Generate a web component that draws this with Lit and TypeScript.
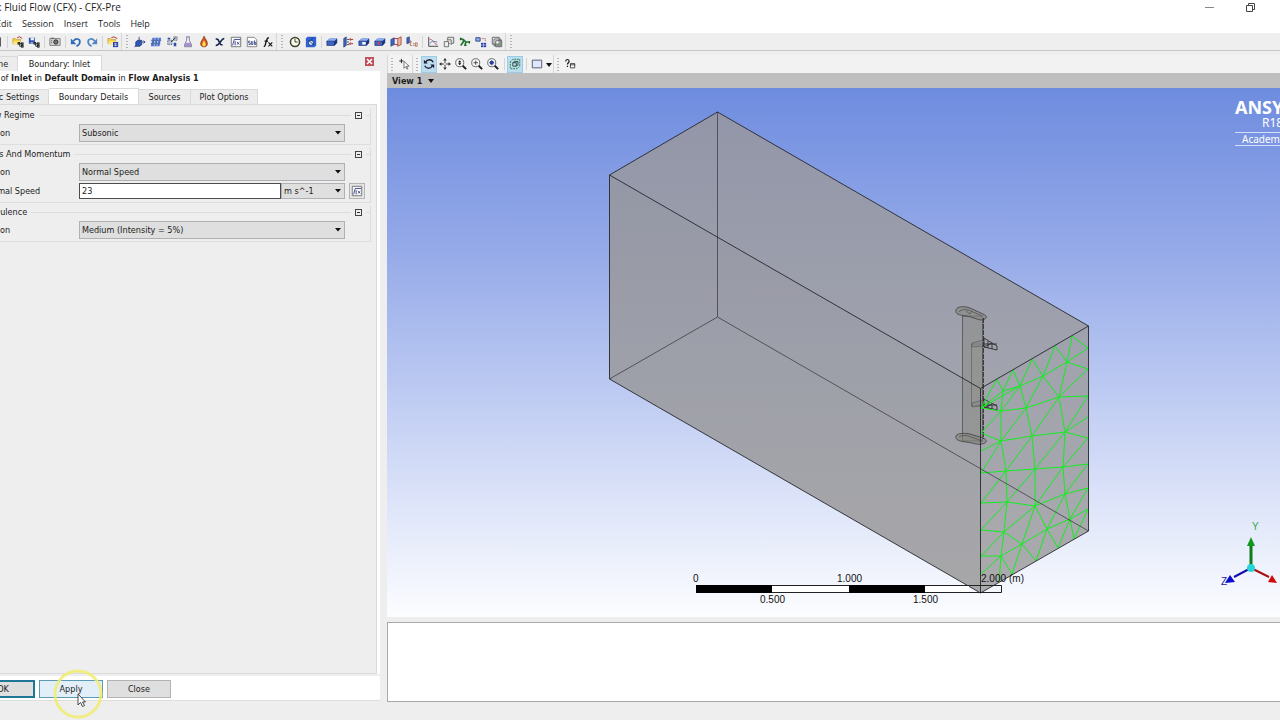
import { LitElement, html, css, svg } from "lit";
import { customElement, property, state } from "lit/decorators.js";

/* Toolbar glyphs, each drawn on a 14 x 14 grid. */
const folder = svg`<path d="M1 3h3l1 1h5v5H1z" fill="#f3cf3f" stroke="#a8841c" stroke-width=".6"/><path d="M2 6h9l-2 4H1z" fill="#fbe680"/>`;
const tree = svg`<g fill="none" stroke="#20242a" stroke-width="1"><path d="M8 9h3M9 9v3h2"/><rect x="7" y="7.500" width="2" height="2" fill="#4c9a54"/><rect x="11" y="8" width="2" height="2" fill="#4c9a54"/><rect x="11" y="11" width="2" height="2" fill="#4c9a54"/></g>`;
const slab = svg`<path d="M1 6l3-3h9v5l-3 3H1z" fill="#3c64c8"/><path d="M1 6l3-3h9l-3 3z" fill="#8fb0f2"/><path d="M10 6l3-3v5l-3 3z" fill="#1d3680"/><path d="M1 6h9v5H1z" fill="none" stroke="#16255c" stroke-width=".7"/>`;
const lens = svg`<circle cx="5.500" cy="5.500" r="4.700" fill="#f7f7f7" stroke="#50545c"/><path d="M9 9l4 4" stroke="#1b1b1b" stroke-width="2.200"/>`;

const glyphs: Record<string, unknown> = {
  new: svg`<path d="M4 2h7v10H4z" fill="#fff" stroke="#333"/>`,
  open: svg`${folder}${tree}<path d="M6 2l3-1 3 2" stroke="#b02020" fill="none"/>`,
  save: svg`<path d="M1 2h7v7H1z" fill="#2d4fae"/><path d="M3 2h4v3H3z" fill="#e8eefc"/><path d="M3 7h3v2H3z" fill="#9ab"/>${tree}`,
  camera: svg`<path d="M1 3h12v8H1z" fill="#d4d4d4" stroke="#777"/><path d="M2 2h4v1H2z" fill="#555"/><circle cx="8" cy="7" r="2.500" fill="#777" stroke="#222"/><path d="M3 5v4" stroke="#444" stroke-dasharray="1 1"/>`,
  undo: svg`<path d="M4 6C6 2 12 3 11.500 7c0 3-2 4-4 5" fill="none" stroke="#2f6cb8" stroke-width="2"/><path d="M1 3v6.500h6.500z" fill="#2f6cb8"/>`,
  redo: svg`<path d="M10 6C8 2 2 3 2.500 7c0 3 2 4 4 5" fill="none" stroke="#4f86c2" stroke-width="2"/><path d="M13 3v6.500H6.500z" fill="#4f86c2"/>`,
  export: svg`${folder}<path d="M5 2l3-1 4 2" stroke="#b02020" fill="none"/><path d="M7 7h6v6H7z" fill="#2742a6"/><path d="M8 9h4M8 11h4M10 8v4" stroke="#dce4ff" stroke-width=".7"/>`,
  domain: svg`<path d="M2 7l2-2h5v5l-2 2H2z" fill="#2f57b8" stroke="#14245c" stroke-width=".7"/><path d="M9 7h3M11 5.500l2 1.500-2 1.500M6 5V1M2 11l-1 2" stroke="#233a7c" fill="none"/>`,
  mesh: svg`<path d="M3 2h10l-2 10H1z" fill="#4770cc"/><path d="M2 5h11M1.500 9h11M6 2L5 12M10 2L8 12" stroke="#dde7ff" stroke-width=".8"/><path d="M1 5h12M1 9h11" stroke="#18306e" stroke-width=".8"/>`,
  interface: svg`<path d="M2 5h5v5H2zM9 1h4v4H9z" fill="#b9c6e6" stroke="#444" stroke-dasharray="1 1"/><path d="M9 8h3v4H9zM2 2h3v2H2z" fill="#2d4fae"/><path d="M6 7l5-5" stroke="#222"/>`,
  flask: svg`<path d="M5 1h4M5.500 1v4L3 10v2.500h8V10L8.500 5V1" fill="#f6f4fc" stroke="#6d6a90"/><path d="M4 8h6l1 4H3z" fill="#a58fd0"/>`,
  flame: svg`<path d="M7 0c1 3 4 5 4 9 0 5-8 5-8 0 0-3 3-5 4-9z" fill="#d8501c" stroke="#5c2410" stroke-width=".6"/><path d="M7 5c1 2 2 3 2 5 0 3-4 3-4 0 0-2 1-3 2-5z" fill="#ffe04c"/>`,
  chi: svg`<path d="M2 4c4-3 4 8 8 6M12 3C8 3 7 11 2 11" fill="none" stroke="#15234f" stroke-width="1.800"/>`,
  expr: svg`<path d="M1.500 1.500h11v11h-11z" fill="#fff" stroke="#666"/><path d="M3 11l2-7h7M6 6v5M8 7l3 3M11 7l-3 3" fill="none" stroke="#24307c"/>`,
  sub: svg`<path d="M1.500 1.500h8l3 3v8h-11z" fill="#fff" stroke="#777"/><path d="M5 6H3v2h2v2H3M6.500 6v4h1.500V6M10 5v5h1.500V7.500H10" fill="none" stroke="#24307c" stroke-width=".9"/>`,
  fx: svg`<path d="M2 12c3 1 2-10 6-10M3 6h4" fill="none" stroke="#111" stroke-width="1.600"/><path d="M7.500 7.500l4.500 4.500M12 7.500L7.500 12" stroke="#111" stroke-width="1.300"/>`,
  clock: svg`<circle cx="7" cy="7" r="5.300" fill="#fafaea" stroke="#3d3f28" stroke-width="1.800"/><path d="M7 3.500V7h3" fill="none" stroke="#222"/>`,
  solver: svg`<path d="M1 3l2-2h10v10l-2 2H1z" fill="#2f62d0"/><circle cx="7" cy="8" r="3" fill="#dbe7ff" stroke="#173784"/><path d="M4 5l6 5M7 4l3-2" stroke="#173784"/>`,
  slab,
  inlet: svg`<path d="M2 3l3-2v10l-3 2z" fill="#3c64c8" stroke="#16255c" stroke-width=".6"/><path d="M6 4h2M6 7h2M6 10h2" stroke="#222"/><path d="M13 4H9M13 9H9M10 2.500L8.500 4 10 5.500M10 7.500L8.500 9l1.500 1.500" stroke="#a01c1c" fill="none"/>`,
  slabOpen: svg`${slab}<path d="M5 7h4v3H5z" fill="#fff"/>`,
  slabPoint: svg`${slab}<circle cx="5.500" cy="8.500" r="1.400" fill="#e04040"/>`,
  pair: svg`<path d="M1 4l4-2v8l-4 2z" fill="#3c64c8" stroke="#16255c" stroke-width=".6"/><path d="M9 3l4-2v9l-4 2z" fill="#eab6a4" stroke="#8c3020" stroke-width=".8"/><path d="M5 3l4 0M5 10h4" stroke="#a01c1c"/>`,
  initial: svg`<path d="M1 2l3-1v7L1 9z" fill="#3c64c8" stroke="#16255c" stroke-width=".6"/><path d="M5 5v6h2M4 7h3M8 9h2M8 11h2M11 8h2v4h-2z" stroke="#a8604c" fill="none" stroke-width=".9"/>`,
  chart: svg`<path d="M2 1v11h11" fill="none" stroke="#333"/><path d="M3 4c4-1 4 5 9 6" stroke="#c44460" fill="none"/><path d="M3 9l3-3 6 1" stroke="#6074ac" fill="none"/>`,
  boxes: svg`<path d="M5.500 1.500h7v7h-7z" fill="#e4e4e4" stroke="#5f6264"/><path d="M1.500 6.500h5v6h-5zM4.500 4.500h5v6" fill="#efefef" stroke="#5f6264"/>`,
  branch: svg`<path d="M1 3l4 1 3 3h5M5 4v3l-3 4M8 7l-1 4" stroke="#1f7a2e" stroke-width="2" fill="none"/><path d="M2 2v3M12 6v3M6 11h3" stroke="#143c1a"/>`,
  config: svg`<path d="M1 2h5v4H1z" fill="#8fb0f2" stroke="#233a7c"/><path d="M7 8h6v5H7z" fill="#2742a6"/><path d="M7 10.500h6M10 8v5" stroke="#fff" stroke-width=".6"/><path d="M8 3h4v4" stroke="#b02020" stroke-dasharray="1 1" fill="none"/>`,
  copies: svg`<path d="M1.500 1.500h8v8h-8zM3.500 3.500h8v8h-8zM5.500 5.500h7v7h-7z" fill="#f6f6f6" stroke="#55585a"/><path d="M7 9l2 2 2-3" stroke="#2a8a3a" fill="none"/>`,
  pick: svg`<path d="M4 1v5M1.500 3.500h5" stroke="#111"/><path d="M7 4v8l2-2 1.500 3 1-.500L10 9.500h3z" fill="#fff" stroke="#444" stroke-width=".8"/>`,
  rotate: svg`<path d="M12 5C10 1 5 1 3 5M2 9c2 4 7 4 9 0" fill="none" stroke="#1d1d2c" stroke-width="1.600"/><path d="M1 2v4.500h4.500zM13 12V7.500H8.500z" fill="#1d1d2c"/>`,
  pan: svg`<path d="M7 3v3M7 8v3M3 7h3M8 7h3" stroke="#222"/><path d="M7 0l2 3H5zM7 14l2-3H5zM0 7l3-2v4zM14 7l-3-2v4z" fill="#222"/>`,
  zoom: svg`${lens}<path d="M5.500 2.500l2 2.500h-4zM5.500 8.500l2-2.500h-4z" fill="#222"/><path d="M5.500 4v3" stroke="#222"/>`,
  zoomBox: svg`${lens}<path d="M5.500 3v5M3 5.500h5" stroke="#333"/>`,
  fit: svg`${lens}<path d="M3.500 3.500h4v4h-4z" fill="#2a3f98"/><path d="M2.500 5.500h6M5.500 2.500v6" stroke="#2a3f98"/>`,
  highlight: svg`<path d="M1.500 4.500l3-3h8v8l-3 3h-8z" fill="#b9dfe4" stroke="#14703c" stroke-dasharray="2 1"/><path d="M4.500 5.500h4v4h-4zM4.500 5.500l2-1.500h4v4l-2 1.500" fill="none" stroke="#1a3c3c"/>`,
  square: svg`<path d="M1.500 2.500h11v9h-11z" fill="#dfe7fb" stroke="#444c68"/>`,
  help: svg`<path d="M2 4c0-3 4-3 4 0 0 1.500-2 1.500-2 3.500M4 9v1.500" stroke="#111" fill="none" stroke-width="1.400"/><path d="M7.500 6.500h5v5h-5zM7 8h6" fill="#fff" stroke="#333"/>`,
};

type Item = [string, string] | "sep" | "grip";
const mainTools: Item[] = [
  ["new", "New"], "sep", ["open", "Open case"], ["save", "Save case"], "sep",
  ["camera", "Save picture"], "sep", ["undo", "Undo"], ["redo", "Redo"], "sep",
  ["export", "Import mesh"], "grip",
  ["domain", "Domain"], ["mesh", "Mesh"], ["interface", "Domain interface"],
  ["flask", "Material"], ["flame", "Reaction"], ["chi", "Additional variable"],
  ["expr", "Expression"], ["sub", "User routine"], ["fx", "User function"], "grip",
  ["clock", "Analysis type"], ["solver", "Solver control"], "sep",
  ["slab", "New domain"], ["inlet", "Boundary"], ["slabOpen", "Subdomain"],
  ["slabPoint", "Source point"], ["pair", "Interface"], ["initial", "Initialisation"], "sep",
  ["chart", "Monitor"], ["boxes", "Mesh adaption"], ["branch", "Output control"],
  ["config", "Configuration"], ["copies", "Execution control"], "grip",
];
const viewTools: Item[] = [
  "grip", ["pick", "Select"], "grip", ["rotate", "Rotate"], ["pan", "Pan"],
  ["zoom", "Zoom"], ["zoomBox", "Zoom box"], ["fit", "Fit view"], "sep",
  ["highlight", "Highlighting"], "sep", ["square", "Viewport layout"],
];

@customElement("tool-strip")
class ToolStrip extends LitElement {
  @property({ attribute: false }) items: Item[] = [];
  @property({ attribute: false }) active: string[] = [];
  static styles = css`
    :host { display: flex; align-items: center; height: 100%; --grip: 10px; --sep: 5px; }
    :host([compact]) { --grip: 8px; --sep: 6px; }
    .tool { width: 16px; height: 17px; padding: 0; border: 0; background: none; display: grid; place-items: center; flex: none; }
    .on { background: #bddcf0; box-shadow: inset 0 0 0 1px #99cde9; }
    .icon { width: 12px; height: 12px; display: block; }
    .sep { width: var(--sep); height: 12px; flex: none; background: linear-gradient(#d4d4d4, #d4d4d4) center / 1px 100% no-repeat; }
    .grip { width: var(--grip); height: 100%; flex: none; border-left: 1px solid #d6d6d6; display: grid; place-items: center; }
    .dots { width: 2px; height: 13px; background: repeating-linear-gradient(#b4b4b4 0 1px, transparent 1px 3px); }
  `;
  render() {
    return this.items.map((it) =>
      it === "sep" ? html`<span class="sep"></span>`
      : it === "grip" ? html`<span class="grip"><span class="dots"></span></span>`
      : html`<button class="tool ${this.active.includes(it[0]) ? "on" : ""}" aria-label=${it[1]}>
          <svg class="icon" viewBox="0 0 14 14">${glyphs[it[0]]}</svg>
        </button>`);
  }
}

/* Triangulated inlet face: node positions and the edges between them. */
const nodes: Record<string, [number, number]> = {
  a: [997, 379], b: [1013, 370], c: [1032, 359], d: [1055, 346], e: [1072, 336],
  n1: [1003, 391], n2: [1020, 386], n3: [1043, 376], n4: [1067, 362],
  r1: [1088, 348], r2: [1088, 369], r3: [1088, 396], r4: [1088, 417], r5: [1088, 438],
  r6: [1088, 464], r7: [1088, 488], r8: [1088, 509],
  n5: [981, 408], n6: [1001, 411], n7: [1026, 408], n8: [1059, 397],
  n9: [1001, 441], n10: [1032, 436], n11: [1065, 432],
  l1: [981, 433], l2: [981, 451], l3: [981, 473], l4: [981, 503], l5: [981, 530], l6: [981, 556], l7: [981, 574],
  n12: [1006, 471], n13: [1035, 469], n14: [1063, 467],
  n15: [1007, 502], n16: [1035, 506], n17: [1065, 494],
  n18: [1004, 532], n19: [1022, 544], n20: [1047, 529], n21: [1070, 519], n22: [1001, 556],
  b1: [1074, 539], b2: [1058, 548], b3: [1036, 561], b4: [1012, 574], b5: [999, 582],
};
const edges = `a-n1 a-n5 b-n1 b-n2 c-n2 c-n3 d-n3 d-n4 e-n4 e-r1 n4-r1 n1-n2 n2-n3 n3-n4 n4-r2 n1-n6 n1-n5
n2-n5 n2-n6 n2-n7 n3-n7 n3-n8 n4-n8 r2-n8 n8-r3 n8-n7 n7-n6 n6-n5 n6-l1 n6-n9 n7-n9 n7-n10 n8-n10 n8-n11 r3-n11
r4-n11 r5-n11 n11-n10 n10-n9 n9-l1 n9-l2 n9-l3 n9-n12 n10-n12 n10-n13 n11-n13 n11-n14 r5-n14 r6-n14 n14-n13
n13-n12 n12-l3 n12-l4 n12-n15 n13-n15 n13-n16 n14-n16 n14-n17 r6-n17 r7-n17 n17-n16 n16-n15 n15-l4 n15-l5
n15-n18 n16-n18 n16-n19 n16-n20 n17-n20 n17-n21 r7-n21 r8-n21 r8-b1 n21-b1 n21-n20 n20-n19 n19-n18 n18-l5 n18-l6
n18-n22 n19-n22 n19-b4 n19-b3 n20-b3 n20-b2 n21-b2 n22-l6 n22-l7 n22-b5 n22-b4`;
const meshPath = edges.split(/\s+/).map((e) => {
  const [p, q] = e.split("-").map((k) => nodes[k]);
  return `M${p}L${q}`;
}).join("");

@customElement("scene-view")
class SceneView extends LitElement {
  static styles = css`
    :host { display: block; position: relative; overflow: hidden; background: linear-gradient(#6e8cdf, #94a9e8 30%, #b9c7f1 55%, #dde4f9 78%, #fcfdff); }
    .scene { position: absolute; left: 0; top: 0; width: 893px; height: 529px; overflow: visible; }
    .lbl { font: 10px "Liberation Sans", Arial, sans-serif; fill: #111; }
    .yax { fill: #3aa84a; }
    .zax { fill: #22228c; }
    .brand { position: absolute; top: 9px; right: 0; width: 85px; color: #fff; font-family: "Noto Sans", sans-serif; }
    .name { font-size: 18px; line-height: 20px; font-weight: 700; }
    .rel { font-size: 12px; line-height: 11px; padding-left: 27px; }
    .lic { font-size: 10px; line-height: 12px; margin-top: 4px; padding-left: 7px; border-block: 1px solid #d5def8; }
  `;
  render() {
    return html`
      <svg class="scene" viewBox="387 88 893 529" role="img" aria-label="Wind tunnel domain with inlet mesh">
        <defs>
          <linearGradient id="body" x1="0" y1="0" x2="0" y2="1">
            <stop offset="0" stop-color="#9296a8"/><stop offset=".5" stop-color="#a0a2ad"/><stop offset="1" stop-color="#ababad"/>
          </linearGradient>
        </defs>
        <path d="M717.500 112L1088.500 326V531L980.500 593L609.500 379V175Z" fill="url(#body)"/>
        <path d="M609.500 175L980.500 388.500V593L609.500 379Z" fill="#85888c" fill-opacity=".1"/>
        <g stroke="#3c3d3c" stroke-width=".8" fill-opacity=".6">
          <path d="M962.500 316h20v125h-20z" fill="#8d8d8b" stroke-opacity=".8"/>
          <path d="M971.500 344h11v62h-11z" fill="#93948f" stroke-opacity=".5"/>
          <path d="M956 310c1-4 9-4 14-2l13 6c5 2 4 5-1 6-5 0-8-3-16-4-7-1-11-2-10-6z" fill="#85857e"/>
          <path d="M959 312c2-3 8-3 12-1l11 5M966 311l4 3 2-3" fill="none" stroke-opacity=".7"/>
          <path d="M956 436c1-3 9-3 14-2l13 4c5 2 4 5-1 6-5 1-8-1-16-2-7-1-11-2-10-6z" fill="#85857e"/>
          <path d="M959 437c3-2 8-2 12 0l11 4" fill="none" stroke-opacity=".7"/>
          <path d="M972 343l11-3v6l-11 1zM972 403l11-3v5l-11 2z" fill="#85868a" stroke-opacity=".5"/>
          <path d="M984 338l13 8v4l-13-3zM984 344h13M988 341v7M992 344v5M984 347l8-4M984 399l13 7v4l-13-3zM984 405h13M988 402v7M992 405v4M984 408l8-4" fill="none" stroke="#222"/>
          <path d="M983.500 318v121" stroke="#222" stroke-dasharray="5 1"/>
        </g>
        <path d=${meshPath} fill="none" stroke="#12ee20" stroke-width="1"/>
        <path d="M717.500 112V317L609.500 379M717.500 317L1088.500 531" fill="none" stroke="#3f4044" stroke-width=".8"/>
        <path d="M609.500 175L717.500 112L1088.500 326L980.500 388.500ZM609.500 175V379L980.500 593V388.500M980.500 593L1088.500 531V326" fill="none" stroke="#26272a" stroke-width=".9"/>
        <path d="M772 586h77v6h-77zM925 586h44v6h-44z" fill="#fff"/>
        <path d="M696.500 585.500h305v7h-305z" fill="none" stroke="#222"/>
        <path d="M696 585h76v8h-76zM849 585h76v8h-76z" fill="#000"/>
        <g class="lbl">
          <text x="693" y="582">0</text><text x="837" y="582">1.000</text><text x="981" y="582">2.000</text><text x="1009" y="582">(m)</text>
          <text x="760" y="603">0.500</text><text x="913" y="603">1.500</text>
        </g>
        <path d="M1251 568V543" stroke="#117a1c" stroke-width="3"/><path d="M1251 537l4 9h-8z" fill="#109a1c"/>
        <path d="M1251 568l-17 9" stroke="#1010a8" stroke-width="2"/><path d="M1225 583l5-8 5 7z" fill="#0b0bd0"/>
        <path d="M1251 568l18 9" stroke="#a81010" stroke-width="2"/><path d="M1277 583l-9-1 4-7z" fill="#d00b0b"/>
        <circle cx="1251" cy="568" r="4" fill="#25d5d8"/>
        <g class="lbl"><text class="yax" x="1252" y="530">Y</text><text class="zax" x="1221" y="585">Z</text></g>
      </svg>
      <div class="brand"><div class="name">ANSYS</div><div class="rel">R18.1</div><div class="lic">Academic</div></div>`;
  }
}

@customElement("app-root")
class AppRoot extends LitElement {
  @state() tab = "Boundary Details";
  static styles = css`
    :host { display: block; height: 100vh; overflow: hidden; position: relative; background: #eee; color: #1c1c1c;
      font: 9px/12px "DejaVu Sans Condensed", "DejaVu Sans", sans-serif; }
    * { box-sizing: border-box; }
    button, input, select { font: inherit; color: inherit; margin: 0; border-radius: 0; }
    button { padding: 0; border: 0; background: none; }
    /* The window hangs over both side edges of the screen. */
    .window { height: 100%; margin: 0 -40px 0 -32px; display: flex; flex-direction: column; }
    .title { height: 14px; flex: none; background: #fff; display: flex; align-items: center; padding: 0 64px 0 22px; }
    .caption { flex: 1; font: 10px/14px "Open Sans", sans-serif; }
    .winbtns { display: flex; gap: 30px; }
    .winbtn { width: 11px; height: 11px; display: block; }
    .menu { height: 19px; flex: none; background: #fff; display: flex; align-items: center; gap: 10px; padding-left: 28px; font: 9px/12px "Open Sans", sans-serif; }
    .bar { height: 18px; flex: none; background: #efefef; border-bottom: 1px solid #c6c6c6; padding-left: 21px; }
    .main { flex: 1; min-height: 0; display: flex; gap: 7px; padding-top: 4px; }
    .dock { flex: 0 0 412px; display: flex; flex-direction: column; }
    .tabs { display: flex; align-items: flex-end; flex: none; }
    .tab { height: 15px; background: #ececec; border: 1px solid #d9d9d9; border-bottom: 0; border-left: 0; text-align: center; flex: none; }
    .tab.cur { background: #fff; height: 16px; }
    .t1 { width: 50px; padding-left: 2px; } .t2 { width: 84px; }
    .close { margin: 0 6px 5px auto; width: 9px; height: 9px; background: #c05058; display: grid; place-items: center; }
    .x { width: 7px; height: 7px; }
    .sheet { flex: 1; min-height: 0; background: #fff; display: flex; flex-direction: column; padding: 1px 3px 0 0; }
    .head { height: 12px; flex: none; padding-left: 2px; white-space: nowrap; }
    .inner { margin-top: 4px; }
    .i0 { width: 81px; padding-left: 5px; } .i1 { width: 90px; } .i2 { width: 52px; } .i3 { width: 67px; }
    .panel { flex: 1; background: #eee; border: 1px solid #dadada; border-left: 0; padding: 4px 5px 0 15px; }
    .group { border: 1px solid #dedede; border-width: 0 1px 1px 0; padding-bottom: 2px; margin-bottom: 3px; }
    .gh { display: flex; align-items: center; gap: 4px; height: 12px; margin-bottom: 3px; }
    .line { flex: 1; height: 1px; background: #dedede; }
    .line.end { flex: 0 0 4px; }
    .fold { width: 7px; height: 7px; border: 1px solid #444; display: grid; place-items: center; }
    .minus { width: 3px; height: 1px; background: #333; }
    .row { display: grid; grid-template-columns: 96px 266px 20px; align-items: center; height: 18px; margin-bottom: 1px; }
    .row:last-child { margin-bottom: 0; }
    .combo { appearance: none; width: 100%; height: 18px; border: 1px solid #aeb0b4; padding: 0 14px 0 2px; outline: 0;
      background: #dfdfdf url("data:image/svg+xml,%3Csvg xmlns='http://www.w3.org/2000/svg' width='6' height='4'%3E%3Cpath d='M0 0h6L3 3.500z' fill='%23111'/%3E%3C/svg%3E") no-repeat right 3px center; }
    .pair { display: grid; grid-template-columns: 202px 64px; align-items: center; }
    .pair .combo { height: 16px; }
    .num { height: 16px; width: 100%; border: 1px solid #4c4c4c; background: #fff; padding: 0 2px; }
    .fxbtn { width: 16px; height: 16px; margin-left: 4px; border: 1px solid #b4b4b4; background: #e6e6e6; display: grid; place-items: center; }
    .fxi { width: 12px; height: 12px; }
    .foot { flex: none; margin-top: 2px; border-bottom: 1px solid #dedede; background: #fff; padding: 4px 3px 2px; display: flex; gap: 4px; }
    .push { width: 64px; height: 18px; border: 1px solid #b2b2b2; background: #dfdfdf; }
    .push.def { border: 2px solid #1f7796; }
    .push.hot { background: #e3eff8; border-color: #5a9ab4; }
    .viewer { flex: 1; min-width: 0; display: flex; flex-direction: column; }
    .vbar { height: 18px; flex: none; display: flex; align-items: center; background: #f2f2f2; }
    .more { width: 8px; height: 17px; }
    .vhead { height: 15px; flex: none; background: #bfbfbf; padding-left: 5px; display: flex; align-items: center; }
    .vname { font-weight: 700; display: flex; align-items: center; gap: 6px; }
    .caret { width: 6px; height: 4px; }
    .view { flex: 1; }
    .console { flex: none; height: 80px; margin-top: 5px; background: #fff; border: 1px solid #a9a9a9; }
    .status { flex: none; height: 18px; }
    .dock { margin-bottom: 1px; }
    .pointer { position: absolute; left: 53px; top: 669px; width: 50px; height: 50px; pointer-events: none; }
  `;

  private combo(id: string, value: string) {
    return html`<select class="combo" id=${id}><option>${value}</option></select>`;
  }
  private group(title: string, rows: unknown) {
    return html`<section class="group">
      <div class="gh"><span>${title}</span><span class="line"></span>
        <button class="fold" aria-label="Collapse ${title}"><span class="minus"></span></button><span class="line end"></span></div>
      ${rows}
    </section>`;
  }
  private tabBtn(name: string, cls: string, cur: boolean) {
    return html`<button role="tab" aria-selected=${cur} class="tab ${cls} ${cur ? "cur" : ""}"
      @click=${() => { if (cls.startsWith("i")) this.tab = name; }}>${name}</button>`;
  }

  render() {
    const caret = html`<svg class="caret" viewBox="0 0 6 4"><path d="M0 0h6L3 4z" fill="#111"/></svg>`;
    return html`
      <div class="window">
        <header class="title">
          <span class="caption">A : Fluid Flow (CFX) - CFX-Pre</span>
          <span class="winbtns">
            <button class="winbtn" aria-label="Minimize"><svg class="winbtn" viewBox="0 0 11 11"><path d="M1 5.500h9" stroke="#888"/></svg></button>
            <button class="winbtn" aria-label="Restore"><svg class="winbtn" viewBox="0 0 11 11"><path d="M1.500 3.500h6v6h-6zM3.500 3v-1.500h6v6H8" fill="none" stroke="#444"/></svg></button>
          </span>
        </header>
        <nav class="menu">${["Edit", "Session", "Insert", "Tools", "Help"].map((m) => html`<button>${m}</button>`)}</nav>
        <div class="bar"><tool-strip .items=${mainTools}></tool-strip></div>
        <main class="main">
          <section class="dock">
            <div class="tabs" role="tablist">
              ${this.tabBtn("Outline", "t1", false)}${this.tabBtn("Boundary: Inlet", "t2", true)}
              <button class="close" aria-label="Close"><svg class="x" viewBox="0 0 7 7"><path d="M1 1l5 5M6 1L1 6" stroke="#fff" stroke-width="1.500"/></svg></button>
            </div>
            <div class="sheet">
              <div class="head">Details of <b>Inlet</b> in <b>Default Domain</b> in <b>Flow Analysis 1</b></div>
              <div class="tabs inner" role="tablist">
                ${["Basic Settings", "Boundary Details", "Sources", "Plot Options"].map((n, i) => this.tabBtn(n, "i" + i, this.tab === n))}
              </div>
              <div class="panel">
                ${this.group("Flow Regime", html`<div class="row"><label for="regime">Option</label>${this.combo("regime", "Subsonic")}</div>`)}
                ${this.group("Mass And Momentum", html`
                  <div class="row"><label for="mass">Option</label>${this.combo("mass", "Normal Speed")}</div>
                  <div class="row"><label for="speed">Normal Speed</label>
                    <div class="pair"><input class="num" id="speed" .value=${"23"}><select class="combo" aria-label="Unit"><option>m s^-1</option></select></div>
                    <button class="fxbtn" aria-label="Enter expression"><svg class="fxi" viewBox="0 0 14 14">${glyphs.expr}</svg></button></div>`)}
                ${this.group("Turbulence", html`<div class="row"><label for="turb">Option</label>${this.combo("turb", "Medium (Intensity = 5%)")}</div>`)}
              </div>
            </div>
            <footer class="foot">
              <button class="push def">OK</button><button class="push hot">Apply</button><button class="push">Close</button>
            </footer>
          </section>
          <section class="viewer">
            <div class="vbar">
              <tool-strip compact .items=${viewTools} .active=${["rotate", "highlight"]}></tool-strip>
              <button class="more" aria-label="More layouts">${caret}</button>
              <tool-strip compact .items=${["grip", ["help", "Help"]]}></tool-strip>
            </div>
            <div class="vhead"><button class="vname">View 1 ${caret}</button></div>
            <scene-view class="view"></scene-view>
            <div class="console"></div>
          </section>
        </main>
        <div class="status"></div>
      </div>
      <svg class="pointer" viewBox="0 0 50 50">
        <circle cx="25" cy="25" r="23" fill="none" stroke="#f1ec6e" stroke-opacity=".85" stroke-width="3"/>
        <path d="M25 25v11l2.500-2.500 2 4 2-1-2-3.500h3z" fill="#fff" stroke="#333" stroke-width=".9"/>
      </svg>`;
  }
}
